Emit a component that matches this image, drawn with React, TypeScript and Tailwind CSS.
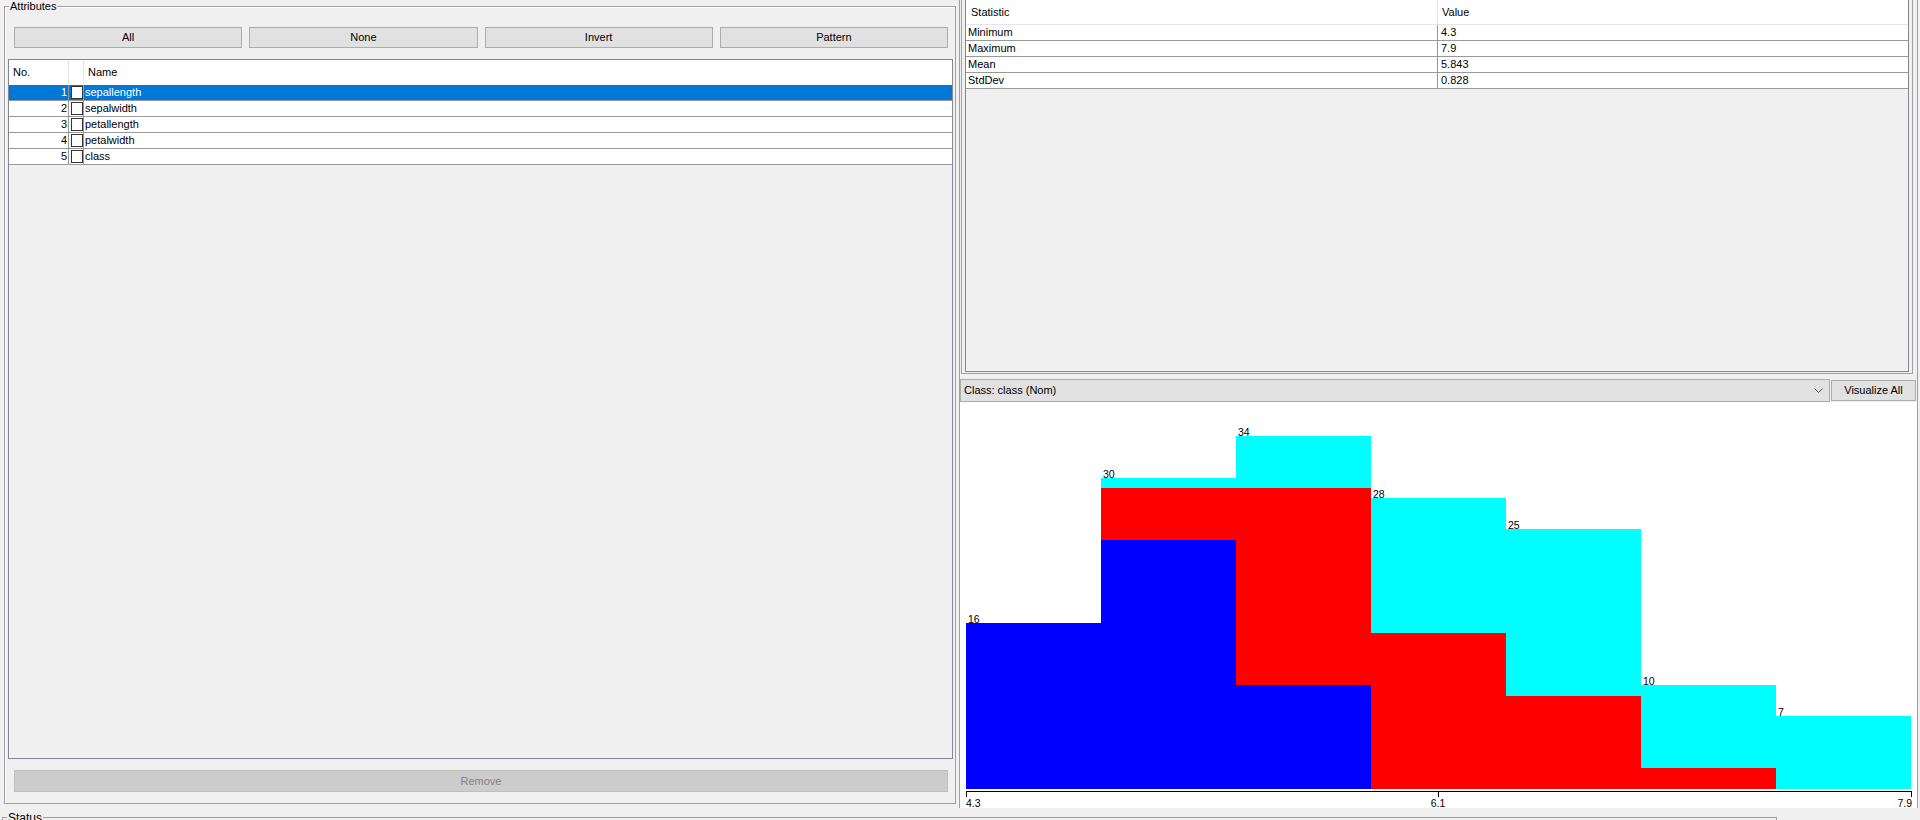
import React from "react";

const attrs = [
  { n: 1, name: "sepallength", sel: true },
  { n: 2, name: "sepalwidth", sel: false },
  { n: 3, name: "petallength", sel: false },
  { n: 4, name: "petalwidth", sel: false },
  { n: 5, name: "class", sel: false },
];

const stats = [
  ["Minimum", "4.3"],
  ["Maximum", "7.9"],
  ["Mean", "5.843"],
  ["StdDev", "0.828"],
];

const bins = [
  { total: 16, blue: 16, red: 0, cyan: 0 },
  { total: 30, blue: 24, red: 5, cyan: 1 },
  { total: 34, blue: 10, red: 19, cyan: 5 },
  { total: 28, blue: 0, red: 15, cyan: 13 },
  { total: 25, blue: 0, red: 9, cyan: 16 },
  { total: 10, blue: 0, red: 2, cyan: 8 },
  { total: 7, blue: 0, red: 0, cyan: 7 },
];

function Btn({ children }: { children: React.ReactNode }) {
  return (
    <div className="h-[21px] flex items-center justify-center bg-[#e1e1e1] border border-[#adadad]">
      {children}
    </div>
  );
}

function Histogram() {
  const base = 387;
  const k = 353 / 34;
  const w = 135;
  const x0 = 6;
  return (
    <svg width="957" height="406" className="block">
      {bins.map((b, i) => {
        const x = x0 + i * w;
        const hb = Math.round(b.blue * k);
        const hr = Math.round((b.blue + b.red) * k);
        const ht = Math.round(b.total * k);
        return (
          <g key={i}>
            {b.blue > 0 && <rect x={x} y={base - hb} width={w} height={hb} fill="#0000ff" />}
            {b.red > 0 && <rect x={x} y={base - hr} width={w} height={hr - hb} fill="#ff0000" />}
            {b.cyan > 0 && <rect x={x} y={base - ht} width={w} height={ht - hr} fill="#00ffff" />}
            <text x={x + 2} y={base - ht} fontSize="10.5" fill="#000" fontFamily="'Liberation Sans', Arial, sans-serif">
              {b.total}
            </text>
          </g>
        );
      })}
      <line x1={6} y1={389.5} x2={952} y2={389.5} stroke="#000" strokeWidth="1" />
      <line x1={6.5} y1={389} x2={6.5} y2={395} stroke="#000" strokeWidth="1" />
      <line x1={478.5} y1={389} x2={478.5} y2={395} stroke="#000" strokeWidth="1" />
      <line x1={951.5} y1={389} x2={951.5} y2={395} stroke="#000" strokeWidth="1" />
      <text x={6} y={405} fontSize="10.5" fill="#000" fontFamily="'Liberation Sans', Arial, sans-serif">4.3</text>
      <text x={478} y={405} fontSize="10.5" fill="#000" textAnchor="middle" fontFamily="'Liberation Sans', Arial, sans-serif">6.1</text>
      <text x={952} y={405} fontSize="10.5" fill="#000" textAnchor="end" fontFamily="'Liberation Sans', Arial, sans-serif">7.9</text>
    </svg>
  );
}

export default function App() {
  return (
    <div className="w-[1920px] h-[820px] bg-[#f0f0f0] overflow-hidden flex flex-col text-[11px] leading-[13px] text-black font-['Liberation_Sans',Arial,sans-serif]">
      <div className="h-[808px] flex shrink-0">
        {/* Left: Attributes */}
        <div className="w-[957px] shrink-0 pt-[6px] pb-[4px] pl-[4px] pr-[1px] flex">
          <div className="relative flex-1 flex flex-col border border-[#a0a0a0] shadow-[inset_1px_1px_0_#ffffff] pt-[20px] pb-[11px] pl-[3px] pr-[2px]">
            <div className="absolute left-[4px] top-[-6px] px-[1px] bg-[#f0f0f0] leading-[11px]">Attributes</div>
            <div className="ml-[6px] mr-[5px] grid grid-cols-4 gap-[7px]">
              <Btn>All</Btn>
              <Btn>None</Btn>
              <Btn>Invert</Btn>
              <Btn>Pattern</Btn>
            </div>
            <div className="mt-[11px] flex-1 border border-[#828790] bg-[#f0f0f0] flex flex-col">
              <div className="h-[25px] shrink-0 bg-white flex">
                <div className="w-[60px] border-r border-[#e5e5e5] pl-[4px] flex items-center">No.</div>
                <div className="w-[15px] border-r border-[#e5e5e5]"></div>
                <div className="flex-1 pl-[4px] flex items-center">Name</div>
              </div>
              {attrs.map((a) => (
                <div
                  key={a.n}
                  className={
                    "h-[16px] shrink-0 flex border-b border-[#999999] " +
                    (a.sel ? "bg-[#0078d7] text-white" : "bg-white text-black")
                  }
                >
                  <div className="w-[60px] border-r border-[#999999] flex items-center justify-end pr-[1px]">{a.n}</div>
                  <div className="w-[15px] border-r border-[#999999] flex items-center pl-[2px]">
                    <div className="w-[12px] h-[13px] bg-white border border-[#333333]"></div>
                  </div>
                  <div className="flex-1 flex items-center pl-[1px]">{a.name}</div>
                </div>
              ))}
            </div>
            <div className="mt-[11px] ml-[6px] mr-[5px] h-[22px] shrink-0 flex items-center justify-center bg-[#cccccc] border border-[#bfbfbf] text-[#838383]">
              Remove
            </div>
          </div>
        </div>

        {/* Right */}
        <div className="w-[963px] shrink-0 pl-[2px] flex">
          <div className="w-[959px] h-full border-x border-[#a0a0a0] flex flex-col">
            {/* stats pane */}
            <div className="ml-[1px] w-[952px] h-[374px] shrink-0 border-x border-b border-[#a0a0a0] pl-[3px] pr-[3px] pb-[1px] flex">
              <div className="flex-1 border-x border-b border-[#828790] bg-[#f0f0f0] flex flex-col">
                <div className="h-[25px] shrink-0 bg-white border-b border-[#e5e5e5] flex">
                  <div className="w-[472px] border-r border-[#e5e5e5] pl-[5px] flex items-center">Statistic</div>
                  <div className="flex-1 pl-[4px] flex items-center">Value</div>
                </div>
                {stats.map(([s, v]) => (
                  <div key={s} className="h-[16px] shrink-0 bg-white border-b border-[#999999] flex">
                    <div className="w-[472px] border-r border-[#999999] pl-[2px] flex items-center">{s}</div>
                    <div className="flex-1 pl-[3px] flex items-center">{v}</div>
                  </div>
                ))}
              </div>
            </div>
            {/* class combo row */}
            <div className="mt-[5px] h-[23px] shrink-0 flex items-center">
              <div className="w-[870px] h-[23px] bg-[#e1e1e1] border border-[#adadad] flex items-center pl-[3px] pr-[6px]">
                <span className="flex-1">Class: class (Nom)</span>
                <svg width="9" height="6" viewBox="0 0 9 6" className="block">
                  <polyline points="0.5,0.5 4.5,4.5 8.5,0.5" fill="none" stroke="#555555" strokeWidth="1" />
                </svg>
              </div>
              <div className="ml-[1px] w-[85px] h-[21px] bg-[#e1e1e1] border border-[#adadad] flex items-center justify-center">
                Visualize All
              </div>
            </div>
            {/* histogram */}
            <div className="flex-1 bg-white">
              <Histogram />
            </div>
          </div>
        </div>
      </div>

      {/* Status */}
      <div className="flex-1 relative">
        <div className="relative mt-[9px] ml-[2px] w-[1775px] h-[10px] border-t border-x border-[#a0a0a0]">
          <div className="absolute left-[4px] top-[-6px] px-[1px] bg-[#f0f0f0] text-[12px] leading-[12px]">Status</div>
        </div>
      </div>
    </div>
  );
}
